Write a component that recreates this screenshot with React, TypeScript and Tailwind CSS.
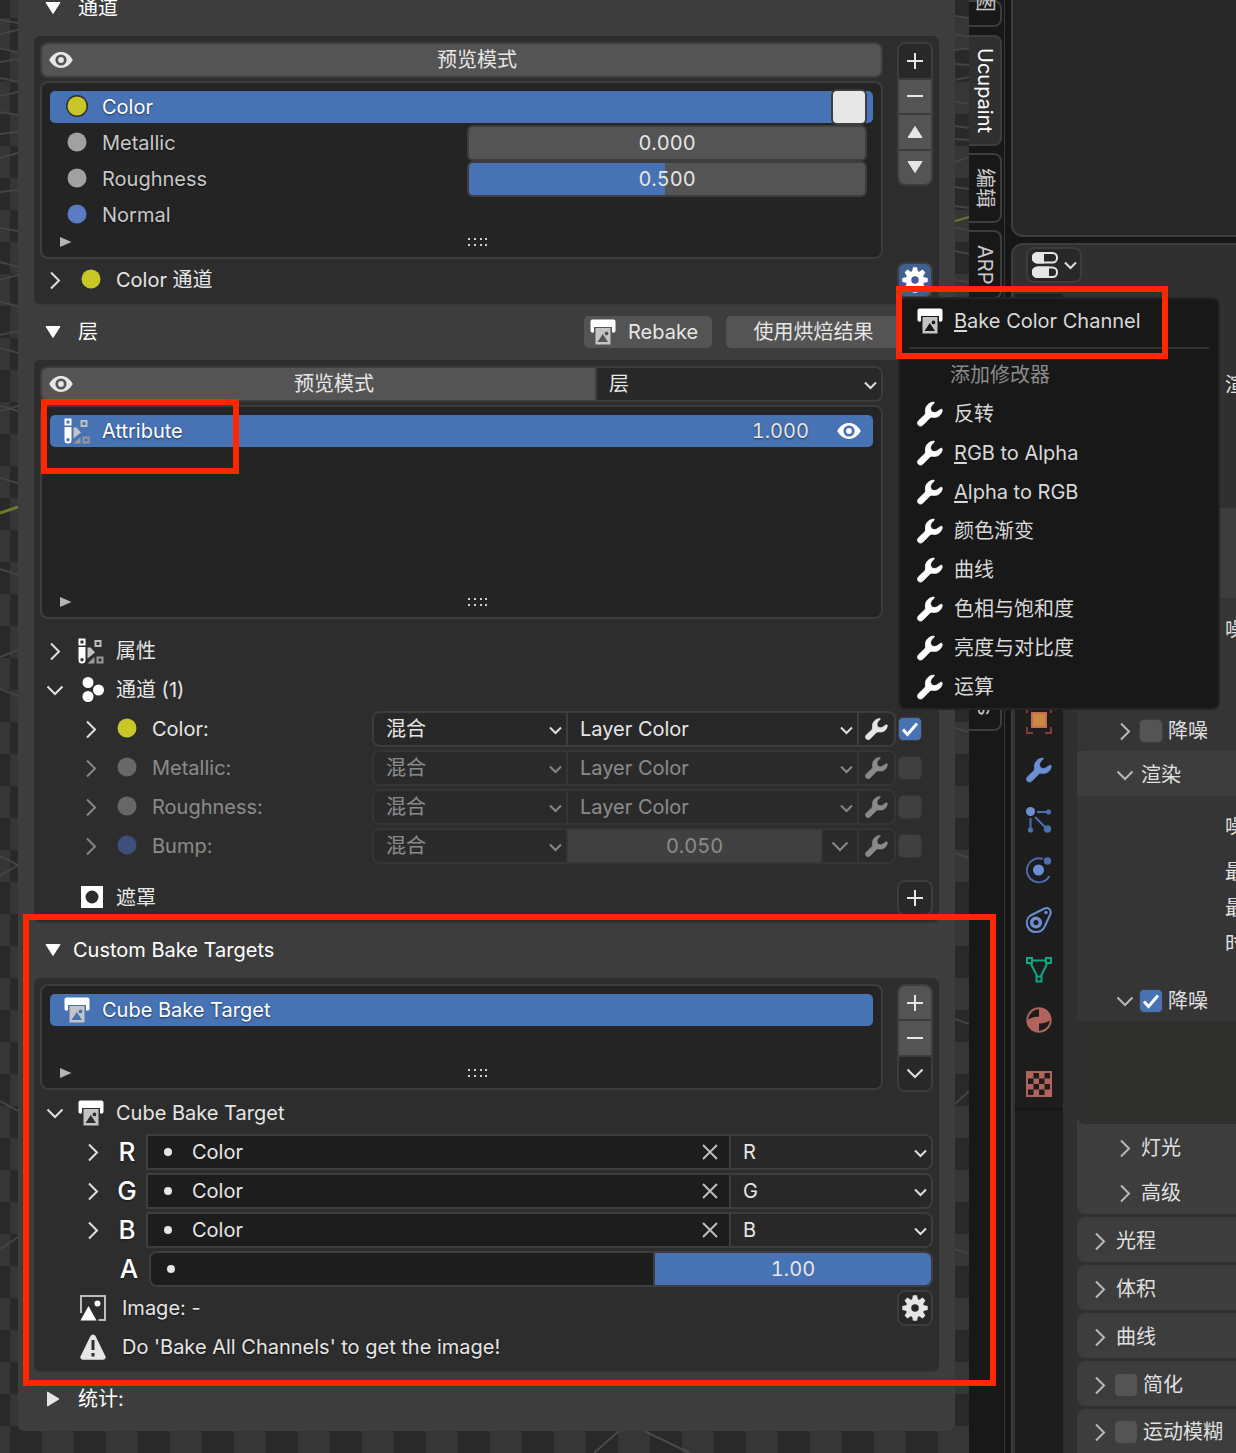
import type { ReactNode } from 'react'

/* ---------- icons ---------- */

function Wrench({ className = 'text-white' }: { className?: string }) {
	return (
		<svg className={className} width="26" height="26" viewBox="-0.5 -0.5 26 26" fill="currentColor" stroke="currentColor" strokeWidth="0.8">
			<path d="M16.2.6C17 .6 17 1.4 16.4 1.9 13.8 4 12.4 6.3 13.4 8.8c1.2 2.8 4.6 2.6 6.6 1.2 1.5-1 2.6-2 3.6-2.3 1-.2 1.3.6 1.1 1.6-.7 4.2-4.2 6.9-8.4 6.6-1.7-.1-3-.4-4 .6l-7 7.1c-1.3 1.3-3.4 1.2-4.5 0-1.1-1.3-1-3 .2-4.3l6.3-6c1-1 .7-2.3.6-4C7.8 4.6 11.5.9 16.2.6Z" />
		</svg>
	)
}

function Eye({ className = 'text-[#e6e6e6]' }: { className?: string }) {
	return (
		<svg className={className} width="24" height="18" viewBox="0 0 24 18" fill="currentColor">
			<path fillRule="evenodd" d="M.2 9C6-1.6 18-1.6 23.8 9 18 19.6 6 19.6.2 9ZM12 3.4a5.6 5.6 0 1 0 0 11.2 5.6 5.6 0 0 0 0-11.2Z" />
			<circle cx="12" cy="9" r="2.9" />
		</svg>
	)
}

function Printer() {
	return (
		<svg width="26" height="26" viewBox="0 0 26 26">
			<path d="M2.5.5h21A2 2 0 0 1 25.500 2.500V11.500a2 2 0 0 1-3.500 1.500V8H4v5A2 2 0 0 1 .5 11.500V2.500A2 2 0 0 1 2.500.5Z" fill="#fff" />
			<path fillRule="evenodd" d="M5.500 9h15v16.500h-15ZM7.500 23h10.500l-5.200-8ZM16.500 12.500a1.900 1.900 0 1 0 0 3.800 1.900 1.900 0 0 0 0-3.800Z" fill="#c4c4c4" />
		</svg>
	)
}

function AttributeIcon() {
	return (
		<svg width="26" height="26" viewBox="0 0 26 26" fill="none">
			<rect x="1.500" y="1.500" width="5" height="5" stroke="#fff" strokeWidth="2" />
			<path fillRule="evenodd" d="M.5 9h7v13a3.500 3.500 0 0 1-7 0ZM4 20a1.700 1.700 0 1 0 0 3.400A1.700 1.700 0 0 0 4 20Z" fill="#fff" />
			<path d="M9.500 9.500h3l4.500 5-7.500 6Z" fill="#c4c4c4" />
			<path d="M9.500 25.500 16.500 19v6.500Z" fill="#9a9a9a" />
			<rect x="17.500" y="3" width="5" height="5" stroke="#bdbdbd" strokeWidth="2" />
			<rect x="19.500" y="19.500" width="5" height="5" stroke="#9a9a9a" strokeWidth="2" />
		</svg>
	)
}

function ChannelsIcon() {
	return (
		<svg width="26" height="26" viewBox="0 0 26 26" fill="#fff">
			<circle cx="10" cy="5.500" r="5.500" />
			<circle cx="20.500" cy="13" r="5.500" />
			<circle cx="10" cy="19.500" r="5.500" />
		</svg>
	)
}

function MaskIcon() {
	return (
		<svg width="26" height="26" viewBox="0 0 26 26" fill="#fff">
			<path fillRule="evenodd" d="M3 1h22v22H3ZM14 5.500a6.500 6.500 0 1 0 0 13 6.500 6.500 0 0 0 0-13Z" />
		</svg>
	)
}

function Gear({ className = 'text-[#e6e6e6]' }: { className?: string }) {
	return (
		<svg className={className} width="26" height="26" viewBox="-13 -13 26 26" fill="currentColor">
			<circle r="6.500" fill="none" stroke="currentColor" strokeWidth="5.500" />
			{[0, 45, 90, 135, 180, 225, 270, 315].map((a) => (
				<path key={a} d="M-3-8-2-12.700H2L3-8Z" transform={`rotate(${a})`} />
			))}
		</svg>
	)
}

function ImageIcon() {
	return (
		<svg width="26" height="26" viewBox="0 0 26 26">
			<path d="M1 18V1h24v24h-6.500" fill="none" stroke="#bdbdbd" strokeWidth="2" />
			<path d="M.5 25.500 8.500 11l8 14.500Z" fill="#fff" />
			<circle cx="17.500" cy="8.500" r="3" fill="#fff" />
		</svg>
	)
}

function WarningIcon() {
	return (
		<svg width="26" height="26" viewBox="0 0 26 26">
			<path fillRule="evenodd" d="M10.500 2a2.800 2.800 0 0 1 5 0l9.800 20a2.500 2.500 0 0 1-2.300 3.700H3A2.500 2.500 0 0 1 .7 22ZM11.500 6v10h3V6ZM11.500 19v3.500h3V19Z" fill="#e6e6e6" />
		</svg>
	)
}

function Dot({ color, ring = false }: { color: string; ring?: boolean }) {
	return (
		<svg width="26" height="26" viewBox="0 0 26 26">
			{ring && <circle cx="13" cy="12" r="11" fill="#303030" />}
			<circle cx="13" cy="12" r="9.500" fill={color} />
		</svg>
	)
}

function Chevron({ open = false, className = 'text-[#e0e0e0]' }: { open?: boolean; className?: string }) {
	return (
		<svg className={className} width="28" height="20" viewBox="0 0 28 20" fill="none" stroke="currentColor" strokeWidth="2">
			<path d={open ? 'M6.500 6.500 14 14l7.500-7.500' : 'M10 2.500 18 10.500 10 18.500'} />
		</svg>
	)
}

function SmallChevron({ className = '' }: { className?: string }) {
	return (
		<svg className={className} width="13" height="9" viewBox="0 0 13 9" fill="none" stroke="#e0e0e0" strokeWidth="2">
			<path d="m1 1.500 5.500 5.500L12 1.500" />
		</svg>
	)
}

function Triangle({ dir, color = '#fff' }: { dir: 'up' | 'down' | 'right'; color?: string }) {
	const d = { up: 'M8 2.500 15 13.500H1Z', down: 'M1 2.500h14L8 13.500Z', right: 'M2.500 1v14L14 8Z' }
	return (
		<svg width="16" height="16" viewBox="0 0 16 16" fill={color} stroke={color} strokeLinejoin="round">
			<path d={d[dir]} />
		</svg>
	)
}

function Glyph({ d }: { d: string }) {
	return (
		<svg width="18" height="18" viewBox="0 0 18 18" fill="none" stroke="#e6e6e6" strokeWidth="2">
			<path d={d} />
		</svg>
	)
}

const PLUS = 'M1 9h16M9 1v16'
const MINUS = 'M1 9h16'
const CROSS = 'm2 2 14 14M16 2 2 16'

/* ---------- widgets ---------- */

function PreviewButton({ className = '' }: { className?: string }) {
	return (
		<button className={`flex flex-1 items-center bg-[#545454] pl-[7px] text-[#e6e6e6] ${className}`}>
			<Eye />
			<span className="flex-1 text-center">预览模式</span>
		</button>
	)
}

function Dropdown({ label, value, className = '' }: { label: string; value: string; className?: string }) {
	return (
		<div className={`relative ${className}`}>
			<select aria-label={label} className="h-full w-full appearance-none bg-[#282828] pl-3 text-[#e6e6e6]" defaultValue={value}>
				<option>{value}</option>
			</select>
			<SmallChevron className="pointer-events-none absolute right-1 top-[calc(50%-3px)]" />
		</div>
	)
}

function NumberField({ label, value, className }: { label: string; value: string; className: string }) {
	return (
		<input
			aria-label={label}
			defaultValue={value}
			className={`min-w-0 text-center tabular-nums text-[#e6e6e6] ${className}`}
		/>
	)
}

function Check({ label, checked = false }: { label: string; checked?: boolean }) {
	return (
		<span className="relative size-6 shrink-0">
			<input
				type="checkbox"
				aria-label={label}
				defaultChecked={checked}
				className="block size-6 appearance-none rounded-[5px] border border-[#3d3d3d] bg-[#545454] checked:bg-[#4772b3]"
			/>
			{checked && (
				<svg className="pointer-events-none absolute inset-0" viewBox="0 0 24 24" fill="none" stroke="#fff" strokeWidth="3">
					<path d="m5 12.500 4.500 5L19 6.500" />
				</svg>
			)}
		</span>
	)
}

function PanelHeader({ title, open = true, gap = 'gap-[17px]', children }: {
	title: string
	open?: boolean
	gap?: string
	children?: ReactNode
}) {
	return (
		<div className="flex h-14 items-center pl-[27px] text-white">
			<button className={`flex items-center ${gap}`}>
				<Triangle dir={open ? 'down' : 'right'} color={open ? '#fff' : '#e6e6e6'} />
				{title}
			</button>
			{children}
		</div>
	)
}

function Box({ children }: { children: ReactNode }) {
	return (
		<section className="mx-4 flex flex-col gap-[3px] rounded-md bg-[#2d2d2d] p-1.5 shadow-[0_2px_0_#383838]">
			{children}
		</section>
	)
}

function ListBox({ children }: { children: ReactNode }) {
	return (
		<div className="rounded-lg border-2 border-[#3d3d3d] bg-[#242424] px-2 py-1.5">
			{children}
			<div className="relative flex h-[18px] items-center justify-center pl-8">
				<svg className="absolute left-[9px]" width="13" height="10" viewBox="0 0 13 10" fill="#b4b4b4">
					<path d="M1 0 12.500 5 1 10Z" />
				</svg>
				<svg width="20" height="8" viewBox="0 0 20 8" fill="#d0d0d0">
					{[0, 6, 12, 17].map((x) => (
						<path key={x} d={`M${x} 0h2v2h-2zM${x} 6h2v2h-2z`} />
					))}
				</svg>
			</div>
		</div>
	)
}

function ListRow({ icon, name, active = false, children }: { icon: ReactNode; name: string; active?: boolean; children?: ReactNode }) {
	return (
		<div className="flex h-9 items-center">
			<div className={`flex h-8 flex-1 items-center gap-3 rounded-[5px] pl-[14px] pr-[6px] ${active ? 'bg-[#4772b3] text-white' : 'text-[#c8c8c8]'}`}>
				{icon}
				<span className="flex-1">{name}</span>
				{children}
			</div>
		</div>
	)
}

function TreeRow({ icon, label, open, children }: { icon: ReactNode; label: string; open?: boolean; children?: ReactNode }) {
	return (
		<div className="flex h-9 items-center text-[#e6e6e6]">
			<button className="flex flex-1 items-center pl-px text-left">
				<span className="mr-[9px] w-7">{open !== undefined && <Chevron open={open} />}</span>
				<span className="mr-3">{icon}</span>
				{label}
			</button>
			{children}
		</div>
	)
}

function IconButton({ label, className = '', children }: { label: string; className?: string; children: ReactNode }) {
	return (
		<button aria-label={label} className={`flex items-center justify-center ${className}`}>
			{children}
		</button>
	)
}

/* ---------- data ---------- */

const layerChannels = [
	{ name: 'Color:', color: '#c7c729', on: true },
	{ name: 'Metallic:', color: '#a1a1a1' },
	{ name: 'Roughness:', color: '#a1a1a1' },
	{ name: 'Bump:', color: '#4f73c7', value: '0.050' },
]

const menuItems = ['反转', 'RGB to Alpha', 'Alpha to RGB', '颜色渐变', '曲线', '色相与饱和度', '亮度与对比度', '运算']

/* ---------- sections ---------- */

function ChannelsBox() {
	return (
		<Box>
			<div className="flex items-start gap-3.5">
				<div className="flex flex-1 flex-col gap-[3px]">
					<div className="flex h-9 overflow-hidden rounded-lg border-2 border-[#3d3d3d]">
						<PreviewButton />
					</div>
					<ListBox>
						<ListRow icon={<Dot color="#c7c729" ring />} name="Color" active>
							<input type="button" aria-label="Color value" className="size-9 rounded-md border-2 border-[#3d3d3d] bg-[#e7e7e7]" />
						</ListRow>
						<ListRow icon={<Dot color="#a1a1a1" />} name="Metallic">
							<NumberField label="Metallic" value="0.000" className="h-9 w-[400px] rounded-md border-2 border-[#3d3d3d] bg-[#545454]" />
						</ListRow>
						<ListRow icon={<Dot color="#a1a1a1" />} name="Roughness">
							<NumberField
								label="Roughness"
								value="0.500"
								className="h-9 w-[400px] rounded-md border-2 border-[#3d3d3d] bg-[#545454] bg-[linear-gradient(90deg,#4772b3_49.500%,#545454_49.500%)]"
							/>
						</ListRow>
						<ListRow icon={<Dot color="#5b7cc4" />} name="Normal" />
					</ListBox>
				</div>
				<div className="flex h-36 w-9 flex-col divide-y-2 divide-[#3d3d3d] overflow-hidden rounded-lg border-2 border-[#3d3d3d]">
					<IconButton label="Add channel" className="flex-1 bg-[#282828]"><Glyph d={PLUS} /></IconButton>
					<IconButton label="Remove channel" className="flex-1 bg-[#545454]"><Glyph d={MINUS} /></IconButton>
					<IconButton label="Move up" className="flex-1 bg-[#545454]"><Triangle dir="up" color="#e6e6e6" /></IconButton>
					<IconButton label="Move down" className="flex-1 bg-[#545454]"><Triangle dir="down" color="#e6e6e6" /></IconButton>
				</div>
			</div>
			<TreeRow icon={<Dot color="#c7c729" />} label="Color 通道" open={false}>
				<IconButton label="Channel settings" className="size-9 rounded-lg border-2 border-[#3d3d3d] bg-[#40608f]">
					<Gear className="text-white" />
				</IconButton>
			</TreeRow>
		</Box>
	)
}

function LayersBox() {
	return (
		<Box>
			<div className="mr-[50px] flex flex-col gap-[3px]">
				<div className="flex h-9 divide-x-2 divide-[#3d3d3d] overflow-hidden rounded-lg border-2 border-[#3d3d3d]">
					<PreviewButton />
					<Dropdown label="Preview type" value="层" className="w-[284px]" />
				</div>
				<ListBox>
					<div className="h-[180px]">
						<ListRow icon={<AttributeIcon />} name="Attribute" active>
							<span className="mr-[14px] tabular-nums text-[#e6e6e6]">1.000</span>
							<span className="mr-1 grid h-6 w-7 place-items-center"><Eye className="text-white" /></span>
						</ListRow>
					</div>
				</ListBox>
			</div>
			<div className="mt-[11px] flex flex-col gap-[3px]">
				<TreeRow icon={<AttributeIcon />} label="属性" open={false} />
				<TreeRow icon={<ChannelsIcon />} label="通道 (1)" open />
				{layerChannels.map((c) => (
					<div key={c.name} className={`flex h-9 items-center gap-0.5 pl-9 pr-[11px] ${c.on ? '' : 'opacity-50'}`}>
						<div className="flex-1">
							<TreeRow icon={<Dot color={c.color} />} label={c.name} open={false} />
						</div>
						<div className="flex h-9 w-[524px] divide-x-2 divide-[#3d3d3d] overflow-hidden rounded-lg border-2 border-[#3d3d3d]">
							<Dropdown label={`${c.name} blend`} value="混合" className="w-[194px]" />
							{c.value ? (
								<>
									<NumberField label={c.name} value={c.value} className="flex-1 bg-[#545454]" />
									<IconButton label="Source" className="w-9 bg-[#282828]"><Chevron open /></IconButton>
								</>
							) : (
								<Dropdown label={`${c.name} source`} value="Layer Color" className="flex-1" />
							)}
							<IconButton label="Modifiers" className="w-[35px] bg-[#282828]"><Wrench className="w-[23px] text-[#e6e6e6]" /></IconButton>
						</div>
						<Check label={`${c.name} enabled`} checked={c.on} />
					</div>
				))}
			</div>
			<div className="mt-[13px]">
				<TreeRow icon={<MaskIcon />} label="遮罩">
					<IconButton label="Add mask" className="size-9 rounded-lg border-2 border-[#3d3d3d] bg-[#282828]">
						<Glyph d={PLUS} />
					</IconButton>
				</TreeRow>
			</div>
		</Box>
	)
}

function BakeTargetsBox() {
	return (
		<Box>
			<div className="flex items-start gap-3.5">
				<div className="flex-1">
					<ListBox>
						<div className="h-[72px]">
							<ListRow icon={<Printer />} name="Cube Bake Target" active />
						</div>
					</ListBox>
				</div>
				<div className="flex h-[108px] w-9 flex-col divide-y-2 divide-[#3d3d3d] overflow-hidden rounded-lg border-2 border-[#3d3d3d]">
					<IconButton label="Add target" className="flex-1 bg-[#545454]"><Glyph d={PLUS} /></IconButton>
					<IconButton label="Remove target" className="flex-1 bg-[#545454]"><Glyph d={MINUS} /></IconButton>
					<IconButton label="More" className="flex-1 bg-[#282828]"><Chevron open /></IconButton>
				</div>
			</div>
			<TreeRow icon={<Printer />} label="Cube Bake Target" open />
			{['R', 'G', 'B'].map((ch) => (
				<div key={ch} className="flex h-9 items-center pl-[39px]">
					<IconButton label={`Expand ${ch}`} className="mr-[7px]"><Chevron /></IconButton>
					<span className="mr-1.5 w-[26px] text-center text-[26px] font-medium text-white">{ch}</span>
					<div className="flex h-9 flex-1 divide-x-2 divide-[#3d3d3d] overflow-hidden rounded-r-lg border-2 border-[#3d3d3d]">
						<div className="flex flex-1 items-center bg-[#1d1d1d] pl-4 pr-2.5">
							<span className="mr-5 size-2 rounded-full bg-[#e6e6e6]" />
							<input aria-label={`${ch} channel`} defaultValue="Color" className="min-w-0 flex-1 text-[#e6e6e6]" />
							<IconButton label={`Clear ${ch}`} className="opacity-80"><Glyph d={CROSS} /></IconButton>
						</div>
						<Dropdown label={`${ch} source`} value={ch} className="w-[200px]" />
					</div>
				</div>
			))}
			<div className="flex h-9 items-center pl-[76px]">
				<span className="mr-[7px] w-[26px] text-center text-[26px] font-medium text-white">A</span>
				<div className="flex h-9 flex-1 divide-x-2 divide-[#3d3d3d] overflow-hidden rounded-lg border-2 border-[#3d3d3d]">
					<div className="flex flex-1 items-center bg-[#1d1d1d] pl-4">
						<span className="size-2 rounded-full bg-[#e6e6e6]" />
						<input aria-label="A channel" className="min-w-0 flex-1" />
					</div>
					<NumberField label="A value" value="1.00" className="w-[276px] bg-[#4772b3]" />
				</div>
			</div>
			<div className="flex h-9 items-center pl-10 text-[#e6e6e6]">
				<ImageIcon />
				<span className="ml-4 flex-1">Image: -</span>
				<IconButton label="Image settings" className="size-9 rounded-lg border-2 border-[#3d3d3d] bg-[#282828]"><Gear /></IconButton>
			</div>
			<div className="flex h-9 items-center pl-10 text-[#e6e6e6]">
				<WarningIcon />
				<span className="ml-4">Do 'Bake All Channels' to get the image!</span>
			</div>
		</Box>
	)
}

function Tab({ label, className = '' }: { label: string; className?: string }) {
	return (
		<button
			className={`flex w-[33px] shrink-0 items-center rounded-r-lg border-2 border-l-0 border-[#3d3d3d] [text-orientation:sideways] [writing-mode:vertical-rl] ${className}`}
		>
			{label}
		</button>
	)
}

function Sidebar() {
	return (
		<nav className="flex w-9 shrink-0 flex-col border-r border-[#383838] bg-[#181818] text-[#c8c8c8]">
			<Tab label="图" className="h-[27px] justify-end pb-[13px]" />
			<Tab label="Ucupaint" className="mt-2 h-[111px] justify-center bg-[#303030] text-white" />
			<Tab label="编辑" className="mt-[7px] h-[70px] justify-center" />
			<Tab label="ARP" className="mt-[7px] h-[69px] justify-center" />
			<Tab label="s" className="mt-[390px] h-[42px] justify-end pb-[13px]" />
		</nav>
	)
}

function PropertyTabs() {
	const blue = '#6a8fd4'
	const dim = '#4a6fae'
	return (
		<div className="flex w-12 shrink-0 flex-col items-center bg-[#1d1d1d] pt-[401px] *:h-[50px]">
			<svg width="26" viewBox="0 0 26 50">
				<rect x="6" y="18" width="14" height="14" fill="#c88a43" stroke="#c96a4f" strokeWidth="2" />
				<path d="M1 18v-5h6M19 13h6v5M25 32v6h-6M7 38H1v-6" fill="none" stroke="#7d3f35" strokeWidth="2" />
			</svg>
			<div className="grid place-items-center"><Wrench className="text-[#6a8fd4]" /></div>
			<svg width="26" viewBox="0 -12 26 50">
				<path d="M11 5h11M4.500 11v12M9 10l12 12" stroke={dim} strokeWidth="2" />
				<circle cx="4.500" cy="4.500" r="4.500" fill={blue} />
				<circle cx="22.500" cy="5" r="2.600" fill={dim} />
				<circle cx="4.500" cy="23" r="2.600" fill={dim} />
				<circle cx="21.500" cy="22" r="3.700" fill={dim} />
			</svg>
			<svg width="26" viewBox="0 -12 26 50">
				<path d="M17 2A12 12 0 1 0 23.500 19" fill="none" stroke={dim} strokeWidth="1.800" />
				<circle cx="12.500" cy="13" r="5.500" fill={blue} />
				<circle cx="21.500" cy="4" r="3.700" fill={dim} />
			</svg>
			<svg width="26" viewBox="0 -12 26 50" fill="none" stroke={blue}>
				<path d="M4.500 8.500 18.500 1.500c4-1.600 7 1.500 6 5.500L18.500 20c-4 7-14 6.500-17-.5-1.500-4-.5-8.500 3-11Z" strokeWidth="2" />
				<circle cx="10" cy="15.500" r="4.300" strokeWidth="3.500" />
				<circle cx="20" cy="5.500" r="1.700" fill={blue} stroke="none" />
			</svg>
			<svg width="26" viewBox="0 -12 26 50" fill="none" stroke="#0fa883" strokeWidth="2">
				<path d="M7 3.500h12M5 7l6 12M21 7l-6 12" />
				<path d="M1 1h5v5H1zM20 1h5v5h-5zM10.500 19.500h5v5h-5z" />
			</svg>
			<svg width="26" viewBox="0 -12 26 50">
				<circle cx="13" cy="13" r="11.700" fill="none" stroke="#b0645c" strokeWidth="2" />
				<path d="M13 1.500A11.500 11.500 0 0 1 24.500 13q-5 3.500-11.500 3.500ZM13 24.500A11.500 11.500 0 0 1 1.500 13q5-3.500 11.500-3.500Z" fill="#b0645c" />
			</svg>
			<div className="mt-[15px] grid w-full place-items-center border-b-2 border-[#161616]">
				<svg width="26" height="26" viewBox="0 0 26 26">
					<rect x="1" y="1" width="24" height="24" fill="none" stroke="#b0645c" strokeWidth="2" />
					<path d="M2 2h5.500v5.500H2zM13 2h5.500v5.500H13zM7.500 7.500H13V13H7.500zM18.500 7.500H24V13h-5.500zM2 13h5.500v5.500H2zM13 13h5.500v5.500H13zM7.500 18.500H13V24H7.500zM18.500 18.500H24V24h-5.500z" fill="#b0645c" />
				</svg>
			</div>
		</div>
	)
}

function PropRow({ label, sub = false, open = false, check, className = 'h-[45px]' }: {
	label: string
	sub?: boolean
	open?: boolean
	check?: 'on' | 'off'
	className?: string
}) {
	return (
		<div className={`flex shrink-0 items-center whitespace-nowrap pt-0.5 text-[#e0e0e0] ${sub ? 'pl-[34px]' : 'pl-[9px]'} ${className}`}>
			<Chevron open={open} className="shrink-0 text-[#b8b8b8]" />
			{check && <Check label={label} checked={check === 'on'} />}
			<span className={check ? 'ml-[5px]' : 'ml-0.5'}>{label}</span>
		</div>
	)
}

// right-aligned label cut by the window edge
function EdgeLabel({ text, className = '' }: { text: string; className?: string }) {
	return <div className={`-mr-[9px] flex h-9 items-center justify-end text-[#e0e0e0] ${className}`}>{text}</div>
}

function PropertiesEditor() {
	return (
		<div className="flex flex-1 flex-col overflow-hidden rounded-tl-xl border-l-2 border-t-2 border-[#3d3d3d] bg-[#303030]">
			<div className="h-[49px] shrink-0 pl-[13px] pt-0.5">
				<button aria-label="Editor type" className="flex h-9 w-14 items-center justify-center gap-1.5 rounded-lg border-2 border-[#3d3d3d] bg-[#282828]">
					<svg width="26" height="26" viewBox="0 0 26 26" fill="none" stroke="#e6e6e6" strokeWidth="2">
						<rect x="1" y="1" width="24" height="9.500" rx="4.500" />
						<rect x="1" y="15.500" width="24" height="9.500" rx="4.500" />
						<path d="M5.500 0H12v11.500H5.500a5.500 5.500 0 0 1 0-11.500ZM5.500 14.500H17v11.500H5.500a5.500 5.500 0 0 1 0-11.500Z" fill="#e6e6e6" stroke="none" />
					</svg>
					<SmallChevron />
				</button>
			</div>
			<div className="flex flex-1 gap-3.5 pl-0.5">
				<PropertyTabs />
				<div className="flex flex-1 flex-col">
					<div className="h-[214px] pt-[73px]">
						<EdgeLabel text="渲" />
					</div>
					<div className="h-[90px] bg-[#3d3d3d]" />
					<div className="flex h-[153px] flex-col justify-between rounded-bl-md bg-[#353535] pt-3.5">
						<EdgeLabel text="噪" />
						<PropRow label="降噪" sub check="off" className="h-[42px]" />
					</div>
					<PropRow label="渲染" sub open className="h-[45px] bg-[#3d3d3d]" />
					<div className="flex flex-col bg-[#353535] pt-[13px]">
						<EdgeLabel text="噪" />
						<EdgeLabel text="最" className="mt-[9px]" />
						<EdgeLabel text="最" />
						<EdgeLabel text="时" />
						<PropRow label="降噪" sub open check="on" className="mt-[17px] h-[42px]" />
					</div>
					<div className="rounded-bl-lg bg-[#3d3d3d]">
						<div className="h-[103px] rounded-bl-lg bg-[#2f2f2d]" />
						<PropRow label="灯光" sub />
						<PropRow label="高级" sub />
					</div>
					<PropRow label="光程" className="mt-[3px] h-[45px] rounded-l-lg bg-[#3d3d3d]" />
					<PropRow label="体积" className="mt-[3px] h-[45px] rounded-l-lg bg-[#3d3d3d]" />
					<PropRow label="曲线" className="mt-[3px] h-[45px] rounded-l-lg bg-[#3d3d3d]" />
					<PropRow label="简化" check="off" className="mt-[3px] h-[45px] rounded-l-lg bg-[#3d3d3d]" />
					<PropRow label="运动模糊" check="off" className="mt-[3px] h-11 rounded-tl-lg bg-[#3d3d3d]" />
				</div>
			</div>
		</div>
	)
}

function MenuText({ text }: { text: string }) {
	const latin = /^[A-Z]/.test(text)
	if (!latin) return <span>{text}</span>
	return (
		<span>
			<span className="underline decoration-2 underline-offset-2">{text[0]}</span>
			{text.slice(1)}
		</span>
	)
}

function ContextMenu() {
	return (
		<div className="absolute right-4 top-[297px] w-[322px] rounded-lg border-2 border-[#242424] bg-[#181818] py-0.5 text-[#d9d9d9]">
			<button className="flex h-[39px] w-full items-center gap-[11px] pl-[17px]">
				<Printer />
				<MenuText text="Bake Color Channel" />
			</button>
			<hr className="mx-[9px] mb-1.5 mt-[7px] border-t-2 border-[#303030]" />
			<div className="flex h-[39px] items-center pl-[50px] text-[#8c8c8c]">添加修改器</div>
			{menuItems.map((m) => (
				<button key={m} className="flex h-[39px] w-full items-center gap-[11px] pl-[17px]">
					<Wrench />
					<MenuText text={m} />
				</button>
			))}
		</div>
	)
}

// faint floor grid of the 3D view, seen around the panel
function FloorGrid() {
	return (
		<div className="pointer-events-none absolute inset-0 flex justify-between">
			<svg width="18" height="1453" fill="none" stroke="#444" strokeWidth="2">
				<path d="M0 20l18 3M0 34l18-4M0 48l18 5M0 62l18-3M0 78l18 4M0 96l18-4M0 112l18 3M0 134l18-2M0 158l18-5M0 192l18-2M0 228l18 3M0 262l18 5M0 280l18-5M0 302l18 4M0 335l18-4M0 348l18 5M0 411l18-5M0 406l18 5M0 478l18 5M0 569l18 6M0 657l18-7M0 689l18 7M0 856l18 9-18 11M0 1101l18 10M0 1249l18-12" />
				<path d="M0 513l18-6" stroke="#6e7a2a" strokeWidth="3" />
			</svg>
			<svg width="14" height="1453" fill="none" stroke="#444" strokeWidth="2">
				<path d="M0 16l14 2M0 34l14 3M0 50l14-2M0 64l14 1M0 80l14-3M0 102l14 2M0 126l14 2M0 139l14 1M0 162l14-5M0 187l14 2M0 206l14 2M0 228l14 2M0 251l14 3M0 280l14 2M0 728l14 4M0 853l14 5M0 1019l14 5M0 1104l14-13M0 1249l14 5" />
				<path d="M0 221l14-4" stroke="#6e7a2a" strokeWidth="2" />
			</svg>
		</div>
	)
}

export default function App() {
	return (
		<div className="relative flex min-h-screen w-full overflow-hidden bg-[#161616] font-['Inter','Noto_Sans_CJK_SC',sans-serif] text-[20px] leading-6 [font-variation-settings:'opsz'_28]">
			<main className="relative flex-1 bg-[repeating-conic-gradient(#292929_0_25%,#363636_0_50%)] bg-size-[64px_64px] bg-position-[-22px_18px] pb-[22px] pl-[18px] pr-[14px]">
				<FloorGrid />
				<svg className="absolute bottom-0 left-[594px]" width="100" height="22" fill="none" stroke="#4a4a4a" strokeWidth="2">
					<path d="M0 22 25 0M50 0l46 22" />
				</svg>
				<div className="relative rounded-b-md bg-[#3d3d3d] pb-1 [text-shadow:0_1px_2px_rgba(0,0,0,0.5)]">
					<div className="flex h-9 items-center pb-5 pl-[27px] text-white">
						<button className="flex items-center gap-[17px]">
							<Triangle dir="down" />
							通道
						</button>
					</div>
					<ChannelsBox />
					<PanelHeader title="层">
						<div className="ml-auto mr-[54px] flex gap-3.5 text-[#e6e6e6]">
							<button className="flex h-8 w-32 items-center gap-3 rounded-[5px] bg-[#545454] pl-1.5"><Printer />Rebake</button>
							<button className="h-8 w-[175px] rounded-[5px] bg-[#545454]">使用烘焙结果</button>
						</div>
					</PanelHeader>
					<LayersBox />
					<PanelHeader title="Custom Bake Targets" gap="gap-3" />
					<BakeTargetsBox />
					<PanelHeader title="统计:" open={false} />
				</div>
			</main>
			<Sidebar />
			<aside className="ml-1.5 flex w-[225px] shrink-0 flex-col gap-1.5">
				<div className="h-[237px] shrink-0 rounded-bl-xl border-b-2 border-l-2 border-[#3d3d3d] bg-[#282828]" />
				<PropertiesEditor />
			</aside>

			<ContextMenu />
			<div className="pointer-events-none absolute right-[68px] top-[286px] h-[73px] w-[272px] border-6 border-[#ff2600]" />
			<div className="pointer-events-none absolute left-[41px] top-[399px] h-[75px] w-[198px] border-6 border-[#ff2600]" />
			<div className="pointer-events-none absolute left-[23px] right-[240px] top-[914px] h-[472px] border-6 border-[#ff2600]" />
		</div>
	)
}
